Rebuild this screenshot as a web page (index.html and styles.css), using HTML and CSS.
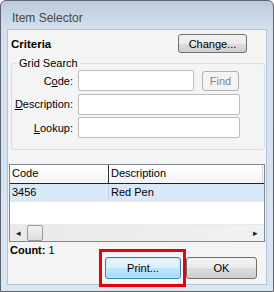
FILE: index.html
```html
<!DOCTYPE html>
<html lang="en">

<head>
    <meta charset="UTF-8">
    <title>Item Selector</title>
    <link rel="stylesheet" href="styles.css">
</head>

<body>
    <div class="window">
        <div class="titlebar">Item Selector</div>
        <div class="client">
            <div class="criteria-row">
                <span class="heading">Criteria</span>
                <button class="btn change">Change...</button>
            </div>
            <fieldset class="grid-search">
                <legend>Grid Search</legend>
                <div class="form">
                    <label>C<u>o</u>de:</label>
                    <div class="code-cell">
                        <input type="text" class="field code">
                        <button class="btn find" disabled>Find</button>
                    </div>
                    <label><u>D</u>escription:</label>
                    <input type="text" class="field">
                    <label><u>L</u>ookup:</label>
                    <input type="text" class="field">
                </div>
            </fieldset>
            <div class="list">
                <div class="list-head">
                    <div class="col col-code">Code</div>
                    <div class="col col-desc">Description</div>
                </div>
                <div class="list-row selected">
                    <div class="col col-code">3456</div>
                    <div class="col col-desc">Red Pen</div>
                </div>
                <div class="list-empty"></div>
                <div class="hscroll">
                    <div class="arrow">&#9666;</div>
                    <div class="track"><div class="thumb"></div></div>
                    <div class="arrow">&#9656;</div>
                </div>
            </div>
            <div class="count"><b>Count:</b> 1</div>
            <div class="buttons">
                <div class="highlight-wrap">
                    <button class="btn default print">Print...</button>
                    <div class="highlight"></div>
                </div>
                <button class="btn ok">OK</button>
            </div>
        </div>
    </div>
</body>

</html>
```

FILE: styles.css
```css
* {
    box-sizing: border-box;
}

body {
    margin: 0;
    font-family: "Liberation Sans", Arial, sans-serif;
    font-size: 11px;
    color: #000;
}

.window {
    width: 274px;
    height: 292px;
    border: 1px solid #5e6470;
    border-radius: 6px 6px 0 0;
    background: linear-gradient(#bccadb 0, #d3e0ee 28px, #d8e5f3 100%);
    padding: 0 6px 6px 6px;
    display: flex;
    flex-direction: column;
}

.titlebar {
    height: 28px;
    flex: none;
    padding: 10px 0 0 5px;
    font-size: 12px;
    line-height: 15px;
    color: #464646;
}

.client {
    flex: 1;
    background: #f4f4f4;
    border: 1px solid #b6c3d2;
    display: flex;
    flex-direction: column;
}

.criteria-row {
    display: flex;
    justify-content: space-between;
    align-items: center;
    height: 19px;
    margin-top: 4px;
    padding: 0 19px 0 3px;
}

.heading {
    font-weight: bold;
    font-size: 11.5px;
}

.btn {
    font-family: "Liberation Sans", Arial, sans-serif;
    font-size: 11px;
    color: #000;
    border: 1px solid #707070;
    border-radius: 3px;
    background: linear-gradient(#f2f2f2 0, #ebebeb 50%, #dddddd 51%, #cfcfcf 100%);
    padding: 0;
}

.change {
    width: 69px;
    height: 19px;
}

.grid-search {
    margin: 4px 1px 0 3px;
    padding: 0 0 11px 0;
    border: 1px solid #d5dfe5;
    border-radius: 3px;
    min-width: 0;
}

.grid-search legend {
    margin-left: 5px;
    padding: 0 2px;
    line-height: 13px;
}

.form {
    display: grid;
    grid-template-columns: 61px 162px;
    grid-auto-rows: 21px;
    column-gap: 5px;
    row-gap: 2.5px;
    align-items: center;
}

.form label {
    text-align: right;
}

.field {
    height: 21px;
    width: 162px;
    border: 1px solid #bcbcbc;
    border-radius: 2px;
    background: #fff;
    padding: 0 3px;
}

.code-cell {
    display: flex;
    align-items: center;
    gap: 8px;
}

.field.code {
    width: 116px;
}

.find {
    width: 37px;
    height: 20px;
    color: #838383;
    border-color: #adb2b5;
    background: #f4f4f4;
}

.list {
    margin: 14px 1px 0 1px;
    height: 78px;
    border: 1px solid #828790;
    background: #fff;
    display: flex;
    flex-direction: column;
}

.list-head {
    display: flex;
    height: 19px;
    background: linear-gradient(#ffffff, #f3f4f6);
    border-bottom: 1px solid #222;
    padding-right: 1px;
}

.list-head .col-desc {
    border-right: 1px solid #d5d5d5;
}

.list-head .col-code {
    border-right: 1px solid #333;
}

.col {
    padding-left: 2px;
    line-height: 17px;
}

.col-code {
    width: 99px;
}

.col-desc {
    flex: 1;
}

.list-row {
    display: flex;
    height: 18px;
    border-bottom: 1px solid #e2e8ef;
}

.list-row .col-code {
    border-right: 1px solid #c5d1dd;
}

.selected {
    background: #d9e8f7;
}

.list-empty {
    flex: 1;
}

.hscroll {
    height: 17px;
    display: flex;
    background: linear-gradient(90deg, #e9e9e9, #f1f1f1);
    border-top: 1px solid #eaeaea;
}

.arrow {
    width: 17px;
    text-align: center;
    font-size: 9px;
    line-height: 16px;
    color: #222;
}

.track {
    flex: 1;
}

.thumb {
    width: 16px;
    height: 16px;
    border: 1px solid #9a9a9a;
    border-radius: 2px;
    background: linear-gradient(#f3f3f3, #dcdcdc);
}

.count {
    margin-top: 2px;
    padding-left: 2px;
    line-height: 13px;
}

.buttons {
    display: flex;
    justify-content: flex-end;
    gap: 5px;
    padding-right: 9px;
}

.highlight-wrap {
    position: relative;
}

.print {
    width: 76px;
    height: 22px;
    border-color: #3c7fb1;
    background: linear-gradient(#eaf6fd 0, #d9f0fc 50%, #bee6fd 51%, #a7d9f5 100%);
    box-shadow: inset 0 0 0 1px #c9e9fa;
}

.ok {
    width: 71px;
    height: 22px;
}

.highlight {
    position: absolute;
    left: -6px;
    top: -8px;
    right: -5px;
    bottom: -8px;
    border: 3px solid #e8000e;
}
```
